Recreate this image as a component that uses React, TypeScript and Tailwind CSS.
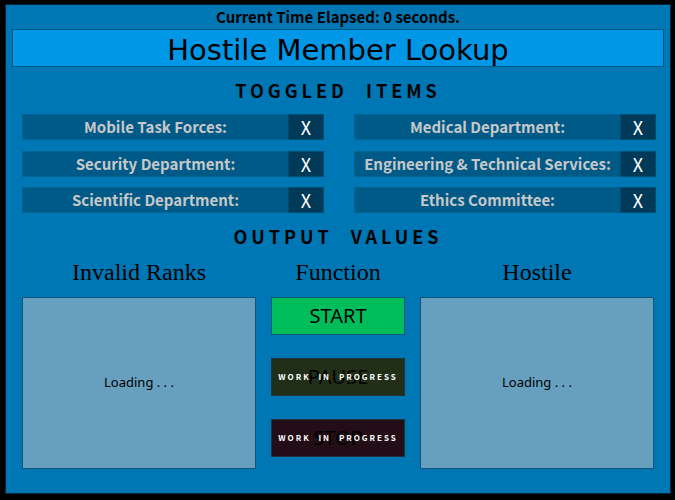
import React from "react";

const toggles = [
  "Mobile Task Forces:",
  "Medical Department:",
  "Security Department:",
  "Engineering & Technical Services:",
  "Scientific Department:",
  "Ethics Committee:",
];

function SectionTitle({ children }: { children: React.ReactNode }) {
  return (
    <h2 className="text-center text-[18px] leading-[22px] font-bold tracking-[4px] [word-spacing:10px]">
      {children}
    </h2>
  );
}

function Toggle({ label }: { label: string }) {
  return (
    <div className="flex h-[26px] text-[#c8c8c8]">
      <span className="flex-1 border border-r-0 border-[#006595] bg-[#005a87] text-center text-[15px] leading-6 font-bold whitespace-nowrap">
        {label}
      </span>
      <button
        type="button"
        aria-label={label}
        className="w-9 border border-[#004f73] bg-[#003a58] text-[18px] leading-6 text-white"
      >
        X
      </button>
    </div>
  );
}

function ColumnTitle({ children }: { children: React.ReactNode }) {
  return (
    <h3 className="h-[41px] text-center font-['Liberation_Serif',serif] text-[24px] leading-8 whitespace-nowrap">
      {children}
    </h3>
  );
}

function Output({ title }: { title: string }) {
  return (
    <section className="min-w-0 flex-1">
      <ColumnTitle>{title}</ColumnTitle>
      <div className="flex h-[172px] items-center justify-center border border-[#12547a] bg-[#679fbe] font-['Noto_Sans',sans-serif] text-[13px]">
        Loading . . .
      </div>
    </section>
  );
}

function PendingButton({ label, className }: { label: string; className: string }) {
  return (
    <button
      type="button"
      disabled
      className={`relative h-[38px] border border-[#21333d] font-['Noto_Sans',sans-serif] text-[20px] leading-6 text-black ${className}`}
    >
      {label}
      <span className="absolute inset-0 flex items-center justify-center font-['Noto_Sans_CJK_SC',sans-serif] text-[8px] font-bold tracking-[2px] [word-spacing:4px] whitespace-nowrap text-white">
        WORK IN PROGRESS
      </span>
    </button>
  );
}

export default function App() {
  return (
    <div className="min-h-screen bg-black pt-1 pr-1 pb-1.5 pl-[5px] font-['Noto_Sans_CJK_SC',sans-serif] text-black">
      <main className="border border-[#07263a] bg-[#0077b5] px-1.5 pb-6">
        <p className="h-6 text-center text-[15px] leading-6 font-bold">
          Current Time Elapsed: 0 seconds.
        </p>
        <h1 className="h-[38px] border border-[#0b5480] bg-[#0097e6] text-center font-['DejaVu_Sans',sans-serif] text-[29px] leading-10 whitespace-nowrap">
          Hostile Member Lookup
        </h1>
        <div className="mt-3">
          <SectionTitle>TOGGLED ITEMS</SectionTitle>
        </div>
        <div className="mt-[13px] grid h-[99px] grid-cols-2 content-between gap-x-[30px] pr-2 pl-2.5">
          {toggles.map((label) => (
            <Toggle key={label} label={label} />
          ))}
        </div>
        <div className="mt-3">
          <SectionTitle>OUTPUT VALUES</SectionTitle>
        </div>
        <div className="mt-[9px] flex gap-[15px] px-2.5">
          <Output title="Invalid Ranks" />
          <section className="flex w-[21.2%] flex-col">
            <ColumnTitle>Function</ColumnTitle>
            <div className="flex flex-col gap-[23px]">
              <button
                type="button"
                className="h-[38px] border border-[#12547a] bg-[#00bd5b] font-['Noto_Sans',sans-serif] text-[20px] leading-6"
              >
                START
              </button>
              <PendingButton label="PAUSE" className="bg-[#212f18]" />
              <PendingButton label="STOP" className="bg-[#230d16]" />
            </div>
          </section>
          <Output title="Hostile" />
        </div>
      </main>
    </div>
  );
}
